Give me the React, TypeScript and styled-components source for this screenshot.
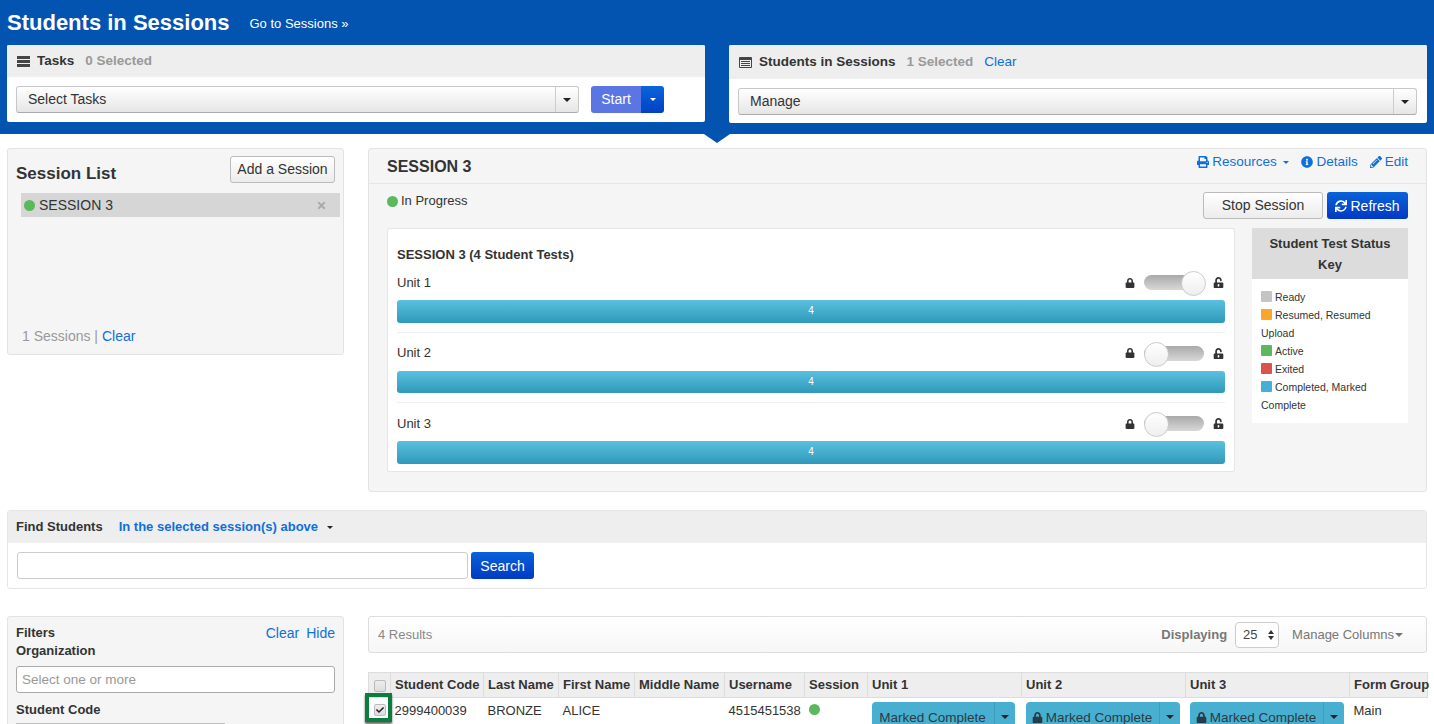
import styled, { createGlobalStyle } from 'styled-components';
import { FaCheck, FaInfoCircle, FaLock, FaPencilAlt, FaPrint, FaSync, FaTimes, FaUnlockAlt } from 'react-icons/fa';

const GlobalStyle = createGlobalStyle`
  html, body {
    margin: 0;
    padding: 0;
    height: 724px;
    overflow: hidden;
    background: #fff;
    font-family: "Liberation Sans", Arial, sans-serif;
    font-size: 14px;
    line-height: 20px;
    color: #333;
  }
  * {
    box-sizing: border-box;
  }
`;

const Page = styled.div`
  width: 1434px;
  height: 724px;
  overflow: hidden;
`;
const Header = styled.header`
  position: relative;
  background: #0353b0;
  padding: 0 7px 11px;
`;
const Notch = styled.div`
  position: absolute;
  left: 704px;
  bottom: -9px;
  border-left: 13px solid transparent;
  border-right: 13px solid transparent;
  border-top: 9px solid #0353b0;
`;
const TitleRow = styled.div`
  display: flex;
  align-items: center;
  height: 45px;
  gap: 20px;
`;
const PageTitle = styled.h1`
  margin: 0;
  font-size: 22px;
  font-weight: 700;
  color: #fff;
`;
const GoLink = styled.a`
  color: #fff;
  font-size: 13px;
  margin-top: 3px;
`;
const PanelGrid = styled.div`
  display: grid;
  grid-template-columns: 698px 698px;
  column-gap: 24px;
  align-items: start;
`;
const ActionPanel = styled.div`
  background: #fff;
  border-radius: 2px;
  overflow: hidden;
`;
const ActionHead = styled.div<{ $h: number }>`
  display: flex;
  align-items: center;
  height: ${(p) => p.$h}px;
  padding: 0 10px;
  background: #eee;
  font-weight: 700;
  font-size: 13.5px;
`;
const HeadIcon = styled.svg`
  width: 13px;
  height: 11px;
  margin-right: 7px;
  fill: #444;
`;
const Muted = styled.span`
  color: #999;
  margin-left: 11px;
`;
const Link = styled.a<{ $ml?: number }>`
  color: #0f6fdb;
  font-weight: 400;
  margin-left: ${(p) => p.$ml ?? 0}px;
`;
const ActionBody = styled.div<{ $pb: number }>`
  display: flex;
  align-items: center;
  padding: 9px 10px ${(p) => p.$pb}px 9px;
`;
const SelectBox = styled.div<{ $w: number }>`
  display: flex;
  align-items: stretch;
  width: ${(p) => p.$w}px;
  height: 27px;
  border: 1px solid #c8c8c8;
  border-bottom-color: #aaa;
  border-radius: 3px;
  background: linear-gradient(#fff, #e6e6e6);
`;
const SelectText = styled.div`
  flex: 1;
  padding-left: 11px;
  line-height: 25px;
`;
const SelectCaret = styled.div`
  width: 23px;
  display: flex;
  align-items: center;
  justify-content: center;
  border-left: 1px solid #ccc;
`;
const Caret = styled.i<{ $color?: string; $size?: number }>`
  display: inline-block;
  border-left: ${(p) => p.$size ?? 4}px solid transparent;
  border-right: ${(p) => p.$size ?? 4}px solid transparent;
  border-top: ${(p) => p.$size ?? 4}px solid ${(p) => p.$color ?? '#222'};
`;
const StartGroup = styled.div`
  display: flex;
  height: 27px;
  margin-left: 12px;
`;
const StartButton = styled.div`
  width: 50px;
  background: #5b76e2;
  color: #fff;
  text-align: center;
  line-height: 27px;
  border-radius: 3px 0 0 3px;
`;
const StartCaret = styled.div`
  width: 23px;
  display: flex;
  align-items: center;
  justify-content: center;
  background: linear-gradient(#0a66d8, #0040c4);
  border-radius: 0 3px 3px 0;
`;

const SessionRow = styled.div`
  display: grid;
  grid-template-columns: 337px 1059px;
  column-gap: 24px;
  align-items: start;
  padding: 14px 7px 0;
`;
const Well = styled.section`
  background: #f5f5f5;
  border: 1px solid #e3e3e3;
  border-radius: 3px;
`;
const ListHead = styled.div`
  display: flex;
  justify-content: space-between;
  padding: 7px 8px 0;
`;
const ListTitle = styled.h2`
  margin: 8px 0 0;
  font-size: 17px;
  line-height: 20px;
  font-weight: 700;
`;
const DefaultButton = styled.div<{ $w: number }>`
  width: ${(p) => p.$w}px;
  height: 27px;
  line-height: 25px;
  text-align: center;
  border: 1px solid #bbb;
  border-radius: 3px;
  background: linear-gradient(#fff, #ececec);
`;
const ListItem = styled.div`
  display: flex;
  align-items: center;
  height: 24px;
  margin: 9px 3px 0 13px;
  padding: 0 13px 0 3px;
  background: #d6d6d6;
`;
const Dot = styled.span<{ $mr?: number }>`
  display: inline-block;
  flex: none;
  width: 11px;
  height: 11px;
  border-radius: 50%;
  background: #5cb85c;
  margin-right: ${(p) => p.$mr ?? 4}px;
`;
const ItemName = styled.span`
  flex: 1;
`;
const ListFoot = styled.div`
  margin-top: 109px;
  padding: 0 14px 8px;
  color: #999;
`;
const DetailHead = styled.div`
  display: flex;
  align-items: center;
  justify-content: space-between;
  height: 35px;
  padding: 0 18px;
  border-bottom: 1px solid #e6e6e6;
`;
const DetailTitle = styled.h2`
  margin: 1px 0 0;
  font-size: 16px;
  font-weight: 700;
`;
const DetailLinks = styled.div`
  display: flex;
  gap: 12px;
  margin-top: -8px;
  font-size: 13.5px;
`;
const IconLink = styled.a`
  display: inline-flex;
  align-items: center;
  gap: 3px;
  color: #0f6fdb;
  svg {
    font-size: 12px;
  }
`;
const DetailBody = styled.div`
  padding: 8px 18px 19px;
`;
const StatusRow = styled.div`
  display: flex;
  justify-content: space-between;
  height: 27px;
`;
const StatusLabel = styled.div`
  display: flex;
  align-items: center;
  height: 20px;
  font-size: 13px;
  margin-top: -1px;
`;
const ButtonRow = styled.div`
  display: flex;
  gap: 4px;
`;
const PrimaryButton = styled.div<{ $w: number }>`
  display: flex;
  align-items: center;
  justify-content: center;
  gap: 3px;
  width: ${(p) => p.$w}px;
  height: 27px;
  color: #fff;
  border-radius: 3px;
  background: linear-gradient(#0a62d8, #0039c4);
  svg {
    font-size: 12px;
  }
`;
const DetailGrid = styled.div`
  display: grid;
  grid-template-columns: 848px 156px;
  column-gap: 17px;
  align-items: start;
  margin-top: 9px;
`;
const UnitBox = styled.div`
  background: #fff;
  border: 1px solid #e6e6e6;
  border-radius: 2px;
  padding: 16px 9px 9px;
  height: 244px;
`;
const UnitBoxTitle = styled.div`
  font-size: 13px;
  font-weight: 700;
  line-height: 20px;
  margin-bottom: 5px;
`;
const UnitBlock = styled.div`
  & + & {
    border-top: 1px solid #eee;
    margin-top: 9px;
    padding-top: 8px;
  }
`;
const UnitTop = styled.div`
  display: flex;
  align-items: center;
  height: 25px;
  font-size: 13px;
`;
const UnitName = styled.span`
  flex: 1;
`;
const Switch = styled.div<{ $on: boolean }>`
  position: relative;
  width: 60px;
  height: 15px;
  margin: 0 9px;
  border-radius: 8px;
  background: linear-gradient(#a9a9a9, #d8d8d8);
  &::after {
    content: '';
    position: absolute;
    top: -4px;
    left: ${(p) => (p.$on ? 37 : 0)}px;
    width: 23px;
    height: 23px;
    border-radius: 50%;
    border: 1px solid #ccc;
    background: linear-gradient(#fff, #eee);
  }
`;
const LockIcon = styled(FaLock)`
  font-size: 10px;
  color: #333;
`;
const UnlockIcon = styled(FaUnlockAlt)`
  font-size: 11px;
  color: #333;
  margin-right: 1px;
`;
const Bar = styled.div`
  height: 22.5px;
  margin-top: 5px;
  border-radius: 3px;
  background: linear-gradient(#5bc0de, #2f99ba);
  color: #fff;
  font-size: 10px;
  line-height: 22px;
  text-align: center;
`;
const KeyCard = styled.aside`
  background: #fff;
  border-radius: 2px;
`;
const KeyHead = styled.div`
  background: #dcdcdc;
  padding: 3px 10px 5px;
  height: 51px;
  text-align: center;
  font-size: 13px;
  font-weight: 700;
  line-height: 21px;
  padding-top: 5px;
`;
const KeyBody = styled.div`
  padding: 9px 9px 9px;
  font-size: 10.5px;
  line-height: 18px;
`;
const Swatch = styled.span<{ $color: string }>`
  display: inline-block;
  width: 11px;
  height: 11px;
  margin-right: 3px;
  vertical-align: -1px;
  border-radius: 1px;
  background: ${(p) => p.$color};
`;

const FindPanel = styled.section`
  margin: 18px 7px 0;
  border: 1px solid #e6e6e6;
  border-radius: 3px;
`;
const FindHead = styled.div`
  display: flex;
  align-items: center;
  gap: 16px;
  height: 32px;
  padding: 0 8px;
  background: #eee;
  font-size: 13px;
  font-weight: 700;
`;
const FindScope = styled.a`
  display: inline-flex;
  align-items: center;
  gap: 9px;
  color: #0f6fdb;
`;
const FindBody = styled.div`
  display: flex;
  gap: 3px;
  padding: 9px 9px 9px;
`;
const TextField = styled.div<{ $w: string }>`
  width: ${(p) => p.$w};
  height: 27px;
  padding-left: 5px;
  line-height: 25px;
  border: 1px solid #ccc;
  border-radius: 3px;
  background: #fff;
  color: #999;
`;

const BottomRow = styled(SessionRow)`
  padding-top: 27px;
`;
const FilterPanel = styled(Well)`
  padding: 7px 8px 0;
  height: 200px;
`;
const FilterHead = styled.div`
  display: flex;
  justify-content: space-between;
  font-weight: 700;
  font-size: 13px;
  height: 18px;
  line-height: 18px;
`;
const FilterLinks = styled.div`
  font-size: 14px;
  display: flex;
  gap: 7px;
`;
const FilterLabel = styled.div`
  font-size: 13px;
  font-weight: 700;
  line-height: 18px;
`;
const FilterInput = styled(TextField)`
  margin-top: 6px;
  margin-bottom: 8px;
  border-color: #aaa;
  font-size: 13.5px;
`;
const GrayInput = styled.div`
  width: 209px;
  height: 27px;
  margin-top: 4px;
  background: #fff;
  border: 1px solid #bbb;
`;
const ResultsBar = styled.div`
  display: flex;
  align-items: center;
  height: 37px;
  padding: 0 23px 0 9px;
  border: 1px solid #ddd;
  border-radius: 3px;
  background: linear-gradient(#fff, #f6f6f6);
  color: #888;
  font-size: 13px;
`;
const ResultsCount = styled.span`
  flex: 1;
`;
const DisplayLabel = styled.span`
  font-weight: 700;
  color: #777;
`;
const PageSize = styled.div`
  display: flex;
  align-items: center;
  justify-content: space-between;
  width: 44px;
  height: 26px;
  margin: 0 13px 0 8px;
  padding: 0 4px 0 7px;
  border: 1px solid #ccc;
  border-radius: 4px;
  background: #fff;
  color: #444;
`;
const Spinner = styled.span`
  display: inline-flex;
  flex-direction: column;
  gap: 2px;
`;
const UpCaret = styled.i`
  border-left: 3px solid transparent;
  border-right: 3px solid transparent;
  border-bottom: 4px solid #333;
`;
const DownCaret = styled.i`
  border-left: 3px solid transparent;
  border-right: 3px solid transparent;
  border-top: 4px solid #333;
`;
const ManageColumns = styled.span`
  display: inline-flex;
  align-items: center;
  gap: 1px;
  color: #777;
`;
const TableWrap = styled.div`
  position: relative;
  margin-top: 19px;
`;
const Table = styled.table`
  width: 1059px;
  table-layout: fixed;
  border-collapse: collapse;
`;
const Th = styled.th`
  height: 25px;
  padding: 0 4px;
  text-align: left;
  font-size: 13px;
  white-space: nowrap;
  background: #eee;
  border: 1px solid #ddd;
`;
const Td = styled.td`
  padding: 3px 4px;
  vertical-align: top;
  font-size: 13px;
  line-height: 19px;
  height: 60px;
`;
const Check = styled.span<{ $checked?: boolean }>`
  display: flex;
  align-items: center;
  justify-content: center;
  width: 12px;
  height: 12px;
  margin: ${(p) => (p.$checked ? '3px 0 0' : '2px 0 0')} 1px;
  border: 1px solid #bbb;
  border-radius: 2px;
  background: linear-gradient(#eee, #ddd);
  font-size: 8px;
  color: #222;
`;
const CodeLink = styled.div`
  color: #0f6fdb;
`;
const Highlight = styled.div`
  position: absolute;
  left: -3px;
  top: 21px;
  width: 27px;
  height: 29px;
  border: 4px solid #0b7d3e;
  box-shadow: 0 2px 2px #666;
`;
const StatusButton = styled.div<{ $w: number }>`
  display: flex;
  align-items: center;
  width: ${(p) => p.$w}px;
  height: 30px;
  margin-top: 1px;
  border-radius: 4px;
  background: #49afd0;
  color: #2b3b44;
  font-size: 13.5px;
`;
const StatusText = styled.span`
  flex: 1;
  display: flex;
  align-items: center;
  justify-content: center;
  gap: 3px;
  svg {
    font-size: 11px;
  }
`;
const StatusCaret = styled.span`
  display: flex;
  align-items: center;
  justify-content: center;
  width: 21px;
  height: 100%;
  border-left: 1px solid #3d9dbc;
`;

const columns = [22, 93, 75, 76, 90, 80, 63, 154, 164, 164, 78];
const headers = ['Student Code', 'Last Name', 'First Name', 'Middle Name', 'Username', 'Session', 'Unit 1', 'Unit 2', 'Unit 3', 'Form Group'];

const units = [
  { name: 'Unit 1', on: true },
  { name: 'Unit 2', on: false },
  { name: 'Unit 3', on: false },
];

const TasksGlyph = () => (
  <HeadIcon viewBox="0 0 13 11">
    <rect x="0" y="0" width="13" height="3" />
    <rect x="0" y="4" width="13" height="3" />
    <rect x="0" y="8" width="13" height="3" />
  </HeadIcon>
);
const ListGlyph = () => (
  <HeadIcon viewBox="0 0 13 11">
    <path d="M1 0h11a1 1 0 0 1 1 1v9a1 1 0 0 1-1 1H1a1 1 0 0 1-1-1V1a1 1 0 0 1 1-1zm0 3v7h11V3H1zm1 1h9v1H2V4zm0 2h9v1H2V6zm0 2h9v1H2V8z" />
  </HeadIcon>
);

export default function App() {
  return (
    <Page>
      <GlobalStyle />
      <Header>
        <TitleRow>
          <PageTitle>Students in Sessions</PageTitle>
          <GoLink>Go to Sessions »</GoLink>
        </TitleRow>
        <PanelGrid>
          <ActionPanel>
            <ActionHead $h={32}>
              <TasksGlyph />
              Tasks
              <Muted>0 Selected</Muted>
            </ActionHead>
            <ActionBody $pb={9}>
              <SelectBox $w={563}>
                <SelectText>Select Tasks</SelectText>
                <SelectCaret>
                  <Caret />
                </SelectCaret>
              </SelectBox>
              <StartGroup>
                <StartButton>Start</StartButton>
                <StartCaret>
                  <Caret $color="#fff" $size={3} />
                </StartCaret>
              </StartGroup>
            </ActionBody>
          </ActionPanel>
          <ActionPanel>
            <ActionHead $h={34}>
              <ListGlyph />
              Students in Sessions
              <Muted>1 Selected</Muted>
              <Link $ml={11}>Clear</Link>
            </ActionHead>
            <ActionBody $pb={8}>
              <SelectBox $w={679}>
                <SelectText>Manage</SelectText>
                <SelectCaret>
                  <Caret />
                </SelectCaret>
              </SelectBox>
            </ActionBody>
          </ActionPanel>
        </PanelGrid>
        <Notch />
      </Header>

      <SessionRow>
        <Well>
          <ListHead>
            <ListTitle>Session List</ListTitle>
            <DefaultButton $w={105}>Add a Session</DefaultButton>
          </ListHead>
          <ListItem>
            <Dot />
            <ItemName>SESSION 3</ItemName>
            <FaTimes color="#aaa" size={11} />
          </ListItem>
          <ListFoot>
            1 Sessions | <Link>Clear</Link>
          </ListFoot>
        </Well>
        <Well>
          <DetailHead>
            <DetailTitle>SESSION 3</DetailTitle>
            <DetailLinks>
              <IconLink>
                <FaPrint />
                Resources&nbsp;
                <Caret $color="#0f6fdb" $size={3} />
              </IconLink>
              <IconLink>
                <FaInfoCircle />
                Details
              </IconLink>
              <IconLink>
                <FaPencilAlt />
                Edit
              </IconLink>
            </DetailLinks>
          </DetailHead>
          <DetailBody>
            <StatusRow>
              <StatusLabel>
                <Dot $mr={3} />
                In Progress
              </StatusLabel>
              <ButtonRow>
                <DefaultButton $w={120}>Stop Session</DefaultButton>
                <PrimaryButton $w={81}>
                  <FaSync />
                  Refresh
                </PrimaryButton>
              </ButtonRow>
            </StatusRow>
            <DetailGrid>
              <UnitBox>
                <UnitBoxTitle>SESSION 3 (4 Student Tests)</UnitBoxTitle>
                {units.map((unit) => (
                  <UnitBlock key={unit.name}>
                    <UnitTop>
                      <UnitName>{unit.name}</UnitName>
                      <LockIcon />
                      <Switch $on={unit.on} />
                      <UnlockIcon />
                    </UnitTop>
                    <Bar>4</Bar>
                  </UnitBlock>
                ))}
              </UnitBox>
              <KeyCard>
                <KeyHead>Student Test Status Key</KeyHead>
                <KeyBody>
                  <Swatch $color="#c4c4c4" />Ready<br />
                  <Swatch $color="#f9a62b" />Resumed, Resumed Upload<br />
                  <Swatch $color="#5cb85c" />Active<br />
                  <Swatch $color="#d9534f" />Exited<br />
                  <Swatch $color="#46b0d4" />Completed, Marked Complete
                </KeyBody>
              </KeyCard>
            </DetailGrid>
          </DetailBody>
        </Well>
      </SessionRow>

      <FindPanel>
        <FindHead>
          Find Students
          <FindScope>
            In the selected session(s) above
            <Caret $size={3} />
          </FindScope>
        </FindHead>
        <FindBody>
          <TextField $w="451px" />
          <PrimaryButton $w={63}>Search</PrimaryButton>
        </FindBody>
      </FindPanel>

      <BottomRow>
        <FilterPanel>
          <FilterHead>
            Filters
            <FilterLinks>
              <Link>Clear</Link>
              <Link>Hide</Link>
            </FilterLinks>
          </FilterHead>
          <FilterLabel>Organization</FilterLabel>
          <FilterInput $w="100%">Select one or more</FilterInput>
          <FilterLabel>Student Code</FilterLabel>
          <GrayInput />
        </FilterPanel>
        <div>
          <ResultsBar>
            <ResultsCount>4 Results</ResultsCount>
            <DisplayLabel>Displaying</DisplayLabel>
            <PageSize>
              25
              <Spinner>
                <UpCaret />
                <DownCaret />
              </Spinner>
            </PageSize>
            <ManageColumns>
              Manage Columns
              <Caret $color="#777" $size={4} />
            </ManageColumns>
          </ResultsBar>
          <TableWrap>
            <Table>
              <colgroup>
                {columns.map((w, i) => (
                  <col key={i} width={w} />
                ))}
              </colgroup>
              <thead>
                <tr>
                  <Th>
                    <Check />
                  </Th>
                  {headers.map((h) => (
                    <Th key={h}>{h}</Th>
                  ))}
                </tr>
              </thead>
              <tbody>
                <tr>
                  <Td>
                    <Check $checked>
                      <FaCheck />
                    </Check>
                  </Td>
                  <Td>
                    2999400039
                    <CodeLink>Student</CodeLink>
                  </Td>
                  <Td>BRONZE</Td>
                  <Td>ALICE</Td>
                  <Td />
                  <Td>4515451538</Td>
                  <Td>
                    <Dot />
                    <br />
                    SESSION 3
                  </Td>
                  <Td>
                    <StatusButton $w={143}>
                      <StatusText>Marked Complete</StatusText>
                      <StatusCaret>
                        <Caret />
                      </StatusCaret>
                    </StatusButton>
                  </Td>
                  <Td>
                    <StatusButton $w={154}>
                      <StatusText>
                        <FaLock />
                        Marked Complete
                      </StatusText>
                      <StatusCaret>
                        <Caret />
                      </StatusCaret>
                    </StatusButton>
                  </Td>
                  <Td>
                    <StatusButton $w={154}>
                      <StatusText>
                        <FaLock />
                        Marked Complete
                      </StatusText>
                      <StatusCaret>
                        <Caret />
                      </StatusCaret>
                    </StatusButton>
                  </Td>
                  <Td>Main</Td>
                </tr>
              </tbody>
            </Table>
            <Highlight />
          </TableWrap>
        </div>
      </BottomRow>
    </Page>
  );
}
